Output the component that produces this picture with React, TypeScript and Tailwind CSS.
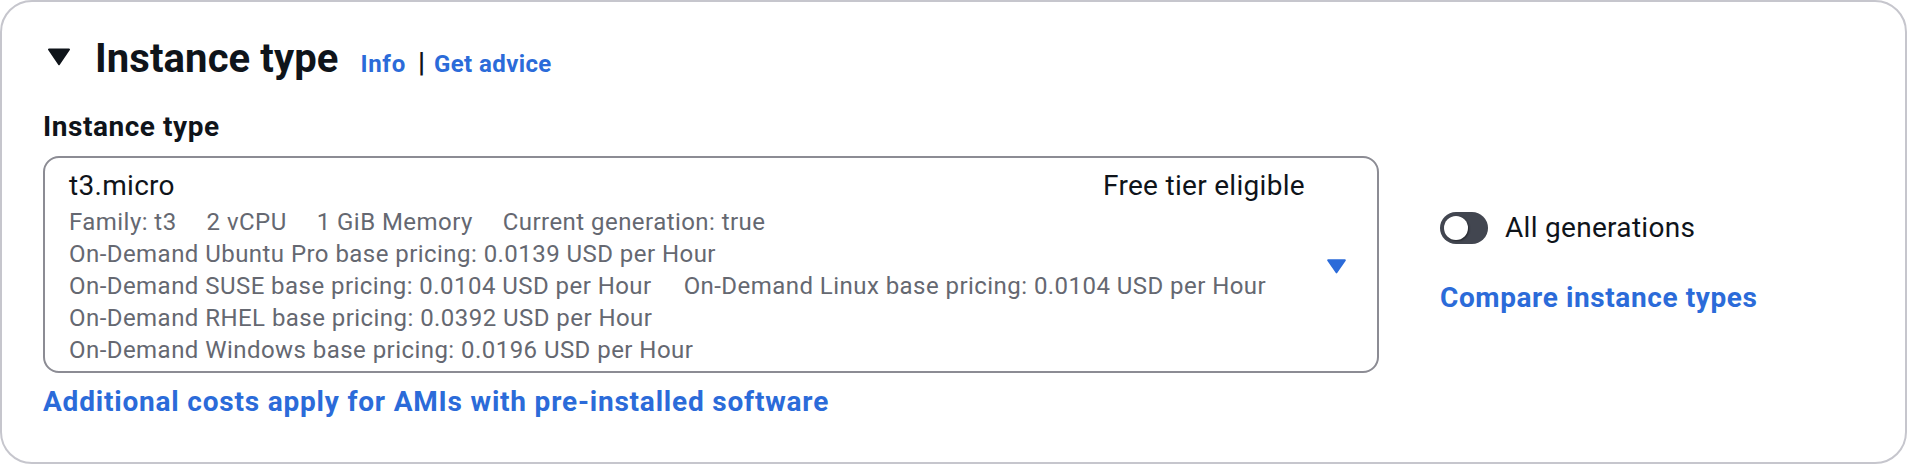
import React from "react";

function CaretDown({ className }: { className?: string }) {
  return (
    <svg viewBox="0 0 24 20" className={className} aria-hidden="true">
      <path d="M2 1.5h20a1 1 0 0 1 .8 1.6l-10 14.6a1 1 0 0 1-1.6 0L1.2 3.1A1 1 0 0 1 2 1.5z" fill="currentColor" />
    </svg>
  );
}

function Toggle() {
  return (
    <div className="relative h-[32px] w-[48px] shrink-0 rounded-full bg-[#424650]">
      <div className="absolute left-[4px] top-[4px] h-[24px] w-[24px] rounded-full bg-white shadow-[1px_1px_2px_rgba(0,0,0,0.45)]" />
    </div>
  );
}

export default function App() {
  return (
    <div className="h-[465px] w-[1908px] bg-white font-['Roboto',sans-serif] text-[#0f141a]">
      <div className="h-[464px] w-[1907px] rounded-[32px] border-2 border-[#c6c6cd] pl-[41px] pt-[33px]">
        {/* Header */}
        <div className="flex h-[48px] items-start">
          <CaretDown className="ml-[4px] mt-[12px] h-[20px] w-[24px] text-[#0f141a]" />
          <div className="ml-[24px] flex items-baseline">
            <h2 className="text-[40px] font-bold leading-[48px] tracking-[0.1px]">Instance type</h2>
            <a className="ml-[22px] text-[24px] font-bold tracking-[0.7px] text-[#2b6bd9]">Info</a>
            <span className="ml-[12px] text-[28px] font-bold leading-none">|</span>
            <a className="ml-[9px] text-[24px] font-bold tracking-[0.4px] text-[#2b6bd9]">Get advice</a>
          </div>
        </div>

        {/* Body */}
        <div className="mt-[24px] flex items-start gap-[61px]">
          <div className="w-[1336px]">
            <div className="text-[28px] font-bold leading-[40px] tracking-[0.55px]">Instance type</div>
            <div className="mt-[9px] flex items-center rounded-[16px] border-2 border-[#8c8c94] pb-[5px] pl-[24px] pr-[30px] pt-[8px]">
              <div className="flex-1">
                <div className="flex justify-between text-[28px] leading-[40px] tracking-[0.3px]">
                  <span>t3.micro</span>
                  <span>Free tier eligible</span>
                </div>
                <div className="text-[24px] leading-[32px] tracking-[0.45px] text-[#656871]">
                  <div className="flex gap-[30px]">
                    <span>Family: t3</span>
                    <span>2 vCPU</span>
                    <span>1 GiB Memory</span>
                    <span>Current generation: true</span>
                  </div>
                  <div>On-Demand Ubuntu Pro base pricing: 0.0139 USD per Hour</div>
                  <div className="flex gap-[32px]">
                    <span>On-Demand SUSE base pricing: 0.0104 USD per Hour</span>
                    <span>On-Demand Linux base pricing: 0.0104 USD per Hour</span>
                  </div>
                  <div>On-Demand RHEL base pricing: 0.0392 USD per Hour</div>
                  <div>On-Demand Windows base pricing: 0.0196 USD per Hour</div>
                </div>
              </div>
              <CaretDown className="ml-[21px] h-[17px] w-[21px] text-[#2b6bd9]" />
            </div>
            <a className="mt-[9px] block text-[28px] font-bold leading-[40px] tracking-[0.8px] text-[#2b6bd9]">
              Additional costs apply for AMIs with pre-installed software
            </a>
          </div>

          <div className="pt-[101px]">
            <div className="flex h-[40px] items-center gap-[17px]">
              <Toggle />
              <span className="text-[28px] leading-[40px] tracking-[0.3px]">All generations</span>
            </div>
            <a className="mt-[30px] block text-[28px] font-bold leading-[40px] tracking-[0.6px] text-[#2b6bd9]">
              Compare instance types
            </a>
          </div>
        </div>
      </div>
    </div>
  );
}
